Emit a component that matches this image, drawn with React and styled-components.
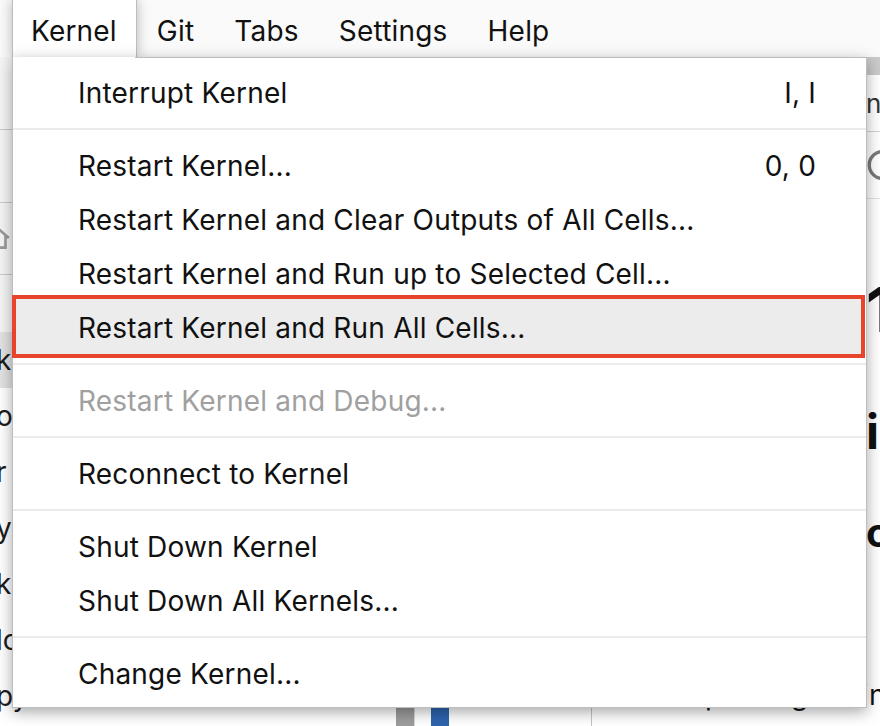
import styled, { createGlobalStyle } from "styled-components";

const GlobalStyle = createGlobalStyle`
  * { box-sizing: border-box; }
  html, body { margin: 0; padding: 0; }
  body {
    background: #fff;
    font-family: "Inter", "Liberation Sans", sans-serif;
    -webkit-font-smoothing: antialiased;
  }
`;

const menuGroups = [
  [{ label: "Interrupt Kernel", keys: "I, I" }],
  [
    { label: "Restart Kernel...", keys: "0, 0" },
    { label: "Restart Kernel and Clear Outputs of All Cells..." },
    { label: "Restart Kernel and Run up to Selected Cell..." },
    { label: "Restart Kernel and Run All Cells...", active: true },
  ],
  [{ label: "Restart Kernel and Debug...", disabled: true }],
  [{ label: "Reconnect to Kernel" }],
  [{ label: "Shut Down Kernel" }, { label: "Shut Down All Kernels..." }],
  [{ label: "Change Kernel..." }],
];

const files = [
  { name: "k", selected: true },
  { name: "oe" },
  { name: "r" },
  { name: "y" },
  { name: "k" },
  { name: "lc" },
  { name: "py" },
];

export default function App() {
  return (
    <Page>
      <GlobalStyle />
      <MenuBar>
        <BarItem $active>Kernel</BarItem>
        <BarItem>Git</BarItem>
        <BarItem>Tabs</BarItem>
        <BarItem>Settings</BarItem>
        <BarItem>Help</BarItem>
      </MenuBar>

      <Workspace>
        <Sidebar>
          <SideColumn>
            <SideSection $h={73} />
            <SideSection $h={73} />
            <SideSection $h={72}>
              <HomeIcon viewBox="0 0 24 24">
                <path d="M3 11 L12 3 L21 11 M6 9 V20 H18 V9" />
              </HomeIcon>
            </SideSection>
            <SideSection $h={57} $plain />
            {files.map((f, i) => (
              <FileRow key={i} $selected={f.selected}>
                {f.name}
              </FileRow>
            ))}
          </SideColumn>
          <ScrollTrack>
            <ScrollThumb />
          </ScrollTrack>
        </Sidebar>

        <Main>
          <TabStrip />
          <DocTab>nc</DocTab>
          <NbToolbar>
            <RefreshIcon viewBox="0 0 24 24">
              <path d="M20 7 A9 9 0 1 0 20 17" />
            </RefreshIcon>
          </NbToolbar>
          <Cells>
            <Heading $size={62} $line={80} $gap={34}>1. Int</Heading>
            <Heading $size={48} $line={60} $gap={52}>import</Heading>
            <Heading $size={40} $line={50} $gap={46}>config</Heading>
            <Cell>
              <Collapser />
              <Prompt />
              <CellText>plotting using</CellText>
            </Cell>
          </Cells>
        </Main>
      </Workspace>

      <Menu>
        {menuGroups.map((group, gi) => (
          <Group key={gi}>
            {gi > 0 && <Separator />}
            {group.map((item) => (
              <Item
                key={item.label}
                $active={item.active}
                $disabled={item.disabled}
              >
                <Label>{item.label}</Label>
                {item.keys && <Shortcut>{item.keys}</Shortcut>}
              </Item>
            ))}
          </Group>
        ))}
      </Menu>
    </Page>
  );
}

const Page = styled.div`
  position: relative;
  width: 880px;
  height: 726px;
  overflow: hidden;
  display: flex;
  flex-direction: column;
  background: #fff;
`;

const MenuBar = styled.div`
  height: 57px;
  flex: none;
  display: flex;
  padding-left: 12px;
  background: #fafafa;
`;

const BarItem = styled.div`
  display: flex;
  align-items: center;
  padding: 5px 20px 0;
  font-size: 28px;
  letter-spacing: 0.2px;
  color: #111;
  ${(p) =>
    p.$active &&
    `
    position: relative;
    z-index: 1;
    padding: 5px 19px 0 18px;
    background: #fff;
    border-left: 1px solid #bdbdbd;
    border-right: 1px solid #bdbdbd;
    box-shadow: 0 0 12px rgba(0, 0, 0, 0.28);
  `}
`;

const Workspace = styled.div`
  flex: 1;
  display: grid;
  grid-template-columns: 415px 1fr;
  min-height: 0;
`;

const Sidebar = styled.div`
  display: grid;
  grid-template-columns: 1fr 18px;
  background: #fff;
  border-right: 1px solid #d6d6d6;
`;

const SideColumn = styled.div`
  display: flex;
  flex-direction: column;
`;

const SideSection = styled.div`
  height: ${(p) => p.$h}px;
  flex: none;
  display: flex;
  align-items: center;
  background: #f5f5f5;
  border-bottom: ${(p) => (p.$plain ? "none" : "1px solid #c9c9c9")};
`;

const HomeIcon = styled.svg`
  flex: none;
  width: 26px;
  height: 26px;
  margin-left: -14px;
  fill: none;
  stroke: #9a9a9a;
  stroke-width: 2.4;
`;

const FileRow = styled.div`
  height: 56px;
  flex: none;
  display: flex;
  align-items: center;
  font-size: 28px;
  color: #1c1c1c;
  white-space: nowrap;
  text-indent: -4px;
  background: ${(p) => (p.$selected ? "#e2e2e2" : "#fff")};
`;

const ScrollTrack = styled.div`
  display: flex;
  flex-direction: column;
  justify-content: flex-end;
`;

const ScrollThumb = styled.div`
  height: 24px;
  background: #9c9c9c;
`;

const Main = styled.div`
  display: flex;
  flex-direction: column;
  min-width: 0;
  overflow: hidden;
`;

const TabStrip = styled.div`
  height: 18px;
  flex: none;
  background: #cacaca;
`;

const DocTab = styled.div`
  height: 57px;
  flex: none;
  display: flex;
  align-items: center;
  padding-left: 451px;
  font-size: 26px;
  color: #333;
  white-space: nowrap;
  border-bottom: 1px solid #d2d2d2;
`;

const NbToolbar = styled.div`
  height: 67px;
  flex: none;
  display: flex;
  align-items: center;
  padding-left: 451px;
  border-bottom: 1px solid #e0e0e0;
  margin-bottom: 37px;
  box-shadow: 0 37px 0 -36px #e6e6e6;
`;

const RefreshIcon = styled.svg`
  flex: none;
  width: 36px;
  height: 36px;
  margin-left: -2px;
  fill: none;
  stroke: #7a7a7a;
  stroke-width: 2.2;
`;

const Cells = styled.div`
  display: flex;
  flex-direction: column;
  padding-left: 16px;
`;

const Heading = styled.div`
  margin-top: ${(p) => p.$gap}px;
  padding-left: 435px;
  font-size: ${(p) => p.$size}px;
  line-height: ${(p) => p.$line}px;
  font-weight: 700;
  color: #111;
  white-space: nowrap;
`;

const Cell = styled.div`
  margin-top: 117px;
  display: flex;
  height: 80px;
`;

const Collapser = styled.div`
  width: 18px;
  flex: none;
  background: #2e64ae;
`;

const Prompt = styled.div`
  width: 143px;
  flex: none;
  border-right: 1px solid #c4c4c4;
`;

const CellText = styled.div`
  padding-left: 113px;
  font-size: 28px;
  line-height: 40px;
  letter-spacing: 0.6px;
  word-spacing: 12px;
  color: #111;
  white-space: nowrap;
`;

const Menu = styled.div`
  position: absolute;
  top: 57px;
  left: 12px;
  width: 855px;
  z-index: 10;
  padding: 8px 0 6px;
  background: #fff;
  border: 1px solid #bdbdbd;
  box-shadow: 0 4px 14px rgba(0, 0, 0, 0.35);

  &::after {
    content: "";
    position: absolute;
    top: -1px;
    left: 0;
    width: 122px;
    height: 1px;
    background: #fff;
  }
`;

const Group = styled.div`
  display: flex;
  flex-direction: column;
`;

const Separator = styled.div`
  height: 2px;
  margin: 8px 0 9px;
  background: #ebebeb;
`;

const Item = styled.div`
  position: relative;
  height: 54px;
  display: flex;
  align-items: center;
  justify-content: space-between;
  padding: 0 50px 0 65px;
  font-size: 28px;
  letter-spacing: 0.2px;
  color: ${(p) => (p.$disabled ? "#a0a0a0" : "#111")};

  ${(p) =>
    p.$active &&
    `
    &::before {
      content: "";
      position: absolute;
      top: -6px;
      bottom: -3px;
      left: -1px;
      right: 1px;
      background: #ececec;
      border: 4px solid #e8432b;
    }
  `}
`;

const Label = styled.span`
  position: relative;
  white-space: nowrap;
`;

const Shortcut = styled.span`
  position: relative;
  white-space: nowrap;
`;
